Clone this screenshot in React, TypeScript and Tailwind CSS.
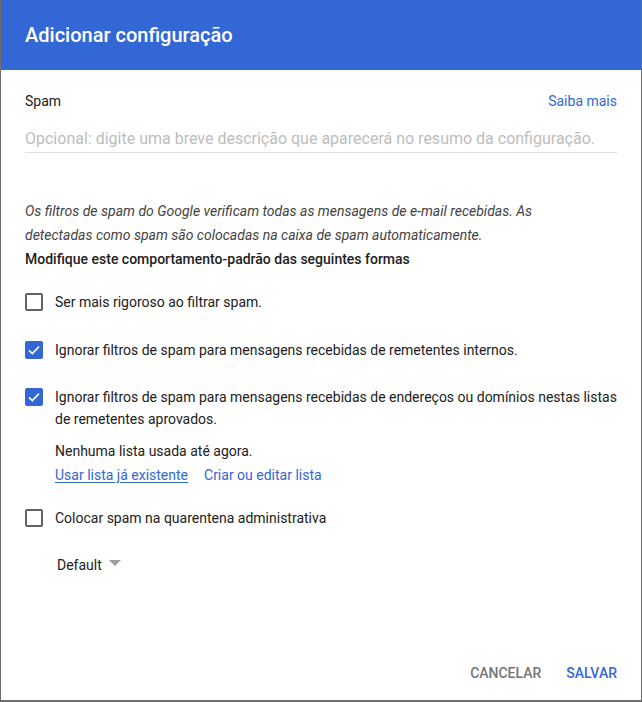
import React from "react";

function Box({ checked }: { checked?: boolean }) {
  if (checked) {
    return (
      <div className="w-[18px] h-[18px] rounded-[2px] bg-[#3367d6] flex items-center justify-center shrink-0">
        <svg width="16" height="16" viewBox="0 0 24 24">
          <path d="M4.5 12.5l5 5L19.5 7" fill="none" stroke="white" strokeWidth="2.4" />
        </svg>
      </div>
    );
  }
  return <div className="w-[18px] h-[18px] rounded-[2px] border-2 border-[#5f6368] shrink-0" />;
}

export default function App() {
  return (
    <div
      className="w-[642px] h-[702px] bg-white border-l border-r border-b-2 border-[#6e6e6e] flex flex-col text-[#212121]"
      style={{ fontFamily: "Roboto, 'Noto Sans', sans-serif" }}
    >
      <div className="h-[70px] bg-[#3367d6] px-[24px] flex items-center shrink-0">
        <h1 className="text-white text-[20px] font-medium leading-[24px]">Adicionar configuração</h1>
      </div>
      <div className="flex-1 px-[24px]">
        <div className="mt-[21px] flex justify-between items-center h-[20px] text-[14px]">
          <span className="text-[#212121]">Spam</span>
          <span className="text-[#3367d6]">Saiba mais</span>
        </div>
        <div className="mt-[16px] pb-[1px] border-b border-[#e0e0e0]">
          <div className="text-[16px] leading-[24px] h-[24px] text-[#bdbdbd]">
            Opcional: digite uma breve descrição que aparecerá no resumo da configuração.
          </div>
        </div>
        <p className="mt-[46px] max-w-[540px] italic text-[14px] leading-[24px] text-[#424242]">
          Os filtros de spam do Google verificam todas as mensagens de e-mail recebidas. As detectadas como spam são colocadas na caixa de spam automaticamente.
        </p>
        <p className="text-[14px] leading-[24px] font-medium text-[#212121]">
          Modifique este comportamento-padrão das seguintes formas
        </p>
        <div className="mt-[19px] flex items-center gap-[12px] h-[24px] text-[14px]">
          <Box />
          <span>Ser mais rigoroso ao filtrar spam.</span>
        </div>
        <div className="mt-[24px] flex items-center gap-[12px] h-[24px] text-[14px]">
          <Box checked />
          <span>Ignorar filtros de spam para mensagens recebidas de remetentes internos.</span>
        </div>
        <div className="mt-[24px] flex items-start gap-[12px] text-[14px]">
          <div className="pt-[2px]">
            <Box checked />
          </div>
          <div className="flex-1">
            <div className="leading-[22px]">
              Ignorar filtros de spam para mensagens recebidas de endereços ou domínios nestas listas de remetentes aprovados.
            </div>
            <div className="mt-[9px] leading-[24px]">Nenhuma lista usada até agora.</div>
            <div className="leading-[24px] flex gap-[16px]">
              <span className="text-[#3367d6] underline underline-offset-2">Usar lista já existente</span>
              <span className="text-[#3367d6]">Criar ou editar lista</span>
            </div>
          </div>
        </div>
        <div className="mt-[19px] flex items-center gap-[12px] h-[24px] text-[14px]">
          <Box />
          <span>Colocar spam na quarentena administrativa</span>
        </div>
        <div className="mt-[23px] ml-[32px] flex items-center gap-[7px] h-[24px] text-[14px]">
          <span>Default</span>
          <svg width="12" height="7" viewBox="0 0 12 7" className="-mt-[3px]">
            <path d="M0 0h12L6 6z" fill="#9e9e9e" />
          </svg>
        </div>
      </div>
      <div className="flex justify-end items-center gap-[25px] pr-[24px] pb-[9px] h-[45px] text-[14px] font-medium">
        <span className="text-[#757575]">CANCELAR</span>
        <span className="text-[#3367d6]">SALVAR</span>
      </div>
    </div>
  );
}
